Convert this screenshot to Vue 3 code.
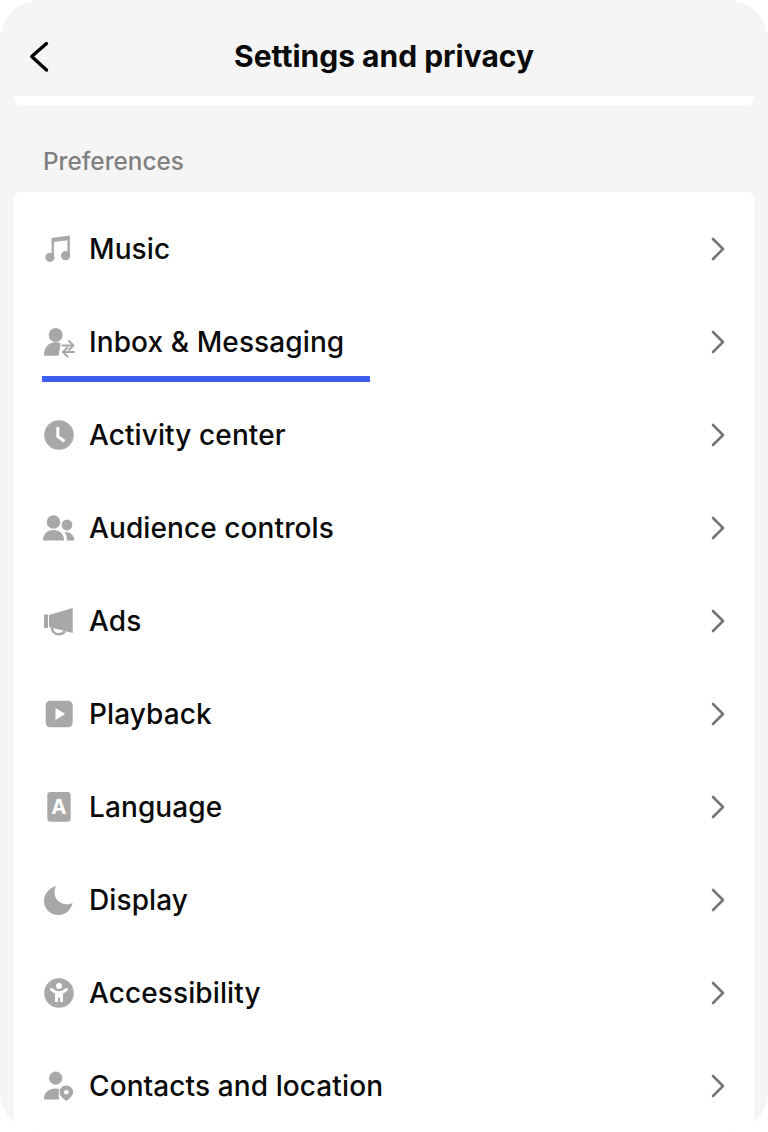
<script setup>
const rows = [
  { label: 'Music', icon: 'music' },
  { label: 'Inbox & Messaging', icon: 'inbox', marked: true },
  { label: 'Activity center', icon: 'clock' },
  { label: 'Audience controls', icon: 'people' },
  { label: 'Ads', icon: 'ads' },
  { label: 'Playback', icon: 'play' },
  { label: 'Language', icon: 'lang' },
  { label: 'Display', icon: 'moon' },
  { label: 'Accessibility', icon: 'access' },
  { label: 'Contacts and location', icon: 'contact' }
]
</script>

<template>
  <div class="page">
    <div class="phone">
      <header class="topbar">
        <button type="button" class="back" aria-label="Back">
          <svg viewBox="0 0 24 34" width="24" height="34" aria-hidden="true">
            <path d="M19.500 4.500 4.700 17.500 19.500 31" fill="none" stroke="#000" stroke-width="3.400" stroke-linecap="round" stroke-linejoin="round" />
          </svg>
        </button>
        <h1>Settings and privacy</h1>
      </header>
      <div class="strip"></div>
      <h2 class="section-title">Preferences</h2>
      <ul class="card">
        <li v-for="row in rows" :key="row.label" class="row">
          <svg class="icon" viewBox="0 0 32 32" width="32" height="32" aria-hidden="true">
            <template v-if="row.icon === 'music'">
              <path d="M9.800 7.500V24M25.600 5.500V22.500" fill="none" stroke="#a8a8a8" stroke-width="2.400" />
              <path d="M8.600 5 26.800 2.600V7L8.600 9.200Z" fill="#a8a8a8" />
              <circle cx="7" cy="24.300" r="4.600" fill="#a8a8a8" />
              <circle cx="22.600" cy="22.700" r="4.600" fill="#a8a8a8" />
            </template>
            <template v-else-if="row.icon === 'inbox'">
              <circle cx="12.700" cy="9" r="7" fill="#a8a8a8" />
              <path d="M1 29.700C1 21 5.500 16.200 12.500 16.200c2.500 0 4 .4 5.200 1.200L15.500 29.700Z" fill="#a8a8a8" />
              <path d="M19.500 19.500H30M26 15l4.500 4.500-4.500 4.500" fill="none" stroke="#a8a8a8" stroke-width="2" stroke-linecap="round" stroke-linejoin="round" />
              <path d="M31 26H20M24.500 21.500 20 26l4.500 4.500" fill="none" stroke="#a8a8a8" stroke-width="2" stroke-linecap="round" stroke-linejoin="round" />
            </template>
            <template v-else-if="row.icon === 'clock'">
              <circle cx="16" cy="16" r="14.800" fill="#a8a8a8" />
              <path d="M14.800 8v9.500l6.700 4.700" fill="none" stroke="#fff" stroke-width="3" stroke-linejoin="round" />
            </template>
            <template v-else-if="row.icon === 'people'">
              <circle cx="10.500" cy="10" r="6.800" fill="#a8a8a8" />
              <path d="M0 28.500c0-6.800 4.500-10.500 10.500-10.500S21 21.700 21 28.500Z" fill="#a8a8a8" />
              <circle cx="24" cy="13" r="5.400" fill="#a8a8a8" />
              <path d="M21.500 20c5.500-.5 9.500 2.500 10 8.500h-7.500c-.3-3.500-.7-6.300-2.500-8.500Z" fill="#a8a8a8" />
            </template>
            <template v-else-if="row.icon === 'ads'">
              <path d="M1 9.500H5V23H1Z" fill="#a8a8a8" />
              <path d="M6 10 29.700 3V28L6 22Z" fill="#a8a8a8" />
              <path d="M8.800 22.500c.3 4 3.200 6.700 7 6.700 2.800 0 5-1 6.200-3" fill="none" stroke="#a8a8a8" stroke-width="2.600" />
            </template>
            <template v-else-if="row.icon === 'play'">
              <rect x="2.700" y="2.700" width="27" height="26.600" rx="4.500" fill="#a8a8a8" />
              <path d="M12.500 10 22.200 16l-9.700 6Z" fill="#fff" />
            </template>
            <template v-else-if="row.icon === 'lang'">
              <rect x="4.300" y="1" width="23.400" height="29.700" rx="3" fill="#a8a8a8" />
              <text x="16" y="23" text-anchor="middle" class="glyph-a">A</text>
            </template>
            <template v-else-if="row.icon === 'moon'">
              <path d="M13 2C6 4 1 10 1 17c0 8 6.500 14 14.500 14 6.500 0 12-4 14.200-12-2 1-3.700 1.300-5.700 1.300C16.500 20.300 11.500 15 11.500 8.500c0-2.500.5-4.500 1.500-6.500Z" fill="#a8a8a8" />
            </template>
            <template v-else-if="row.icon === 'access'">
              <circle cx="16" cy="16" r="14.800" fill="#a8a8a8" />
              <circle cx="16" cy="9" r="3" fill="#fff" />
              <path d="M8.500 12.500 11.800 14.700c1.200.8 2.800 1.100 4.200 1.100s3-.3 4.200-1.100l3.300-2.200" fill="none" stroke="#fff" stroke-width="3" stroke-linecap="round" />
              <path d="M12 14.500h8V25h-3v-4.300h-2V25h-3Z" fill="#fff" />
            </template>
            <template v-else>
              <circle cx="12.700" cy="8.200" r="6.600" fill="#a8a8a8" />
              <path d="M1 29.500c0-7 4.500-11 11-11 2.500 0 4.500.5 6.500 1.500-2.800 2-3.500 6-2 9.500Z" fill="#a8a8a8" />
              <path d="M23.300 31.500c-4.700-3.400-7.300-6.200-7.300-9.200a7.300 7.300 0 0 1 14.600 0c0 3-2.600 5.800-7.300 9.200Z" fill="#a8a8a8" stroke="#fff" stroke-width="1" />
              <circle cx="23.300" cy="22.300" r="2.300" fill="#fff" />
            </template>
          </svg>
          <span class="label">{{ row.label }}</span>
          <svg class="chevron" viewBox="0 0 16 26" width="16" height="26" aria-hidden="true">
            <path d="M3 3 13 13 3 23" fill="none" stroke="#757575" stroke-width="2.600" stroke-linecap="round" stroke-linejoin="round" />
          </svg>
          <span v-if="row.marked" class="marker"></span>
        </li>
      </ul>
    </div>
  </div>
</template>

<style scoped>
.page {
  height: 1132px;
  background: #fff;
  overflow: hidden;
  font-family: Inter, "Liberation Sans", sans-serif;
}

.phone {
  height: 1132px;
  background: #f5f5f5;
  border-radius: 40px;
  padding: 0 14px;
  box-sizing: border-box;
  overflow: hidden;
}

.topbar {
  position: relative;
  height: 96px;
  display: flex;
  align-items: center;
  justify-content: center;
  padding-top: 16px;
  box-sizing: border-box;
}

.topbar h1 {
  margin: 0;
  font-size: 30px;
  font-weight: 700;
  color: #0a0a0a;
}

.back {
  position: absolute;
  left: 13px;
  top: 39px;
  padding: 0;
  border: 0;
  background: none;
  display: block;
}

.back svg {
  display: block;
}

.strip {
  height: 9px;
  background: #fff;
  border-radius: 0 0 6px 6px;
}

.section-title {
  margin: 0;
  padding: 41px 0 0 29px;
  height: 87px;
  box-sizing: border-box;
  font-size: 24.300px;
  line-height: 30px;
  font-weight: 500;
  color: #808080;
}

.card {
  margin: 0;
  padding: 10px 0 0;
  list-style: none;
  background: #fff;
  border-radius: 6px 6px 0 0;
  height: 940px;
  box-sizing: border-box;
}

.row {
  position: relative;
  height: 93px;
  display: flex;
  align-items: center;
  padding: 0 28px;
}

.icon {
  flex: none;
  margin: 0 14px 0 1px;
  overflow: visible;
}

.glyph-a {
  font-family: Inter, sans-serif;
  font-size: 20.500px;
  font-weight: 700;
  fill: #fff;
}

.label {
  flex: 1;
  font-size: 28px;
  letter-spacing: 0.1px;
  font-weight: 500;
  color: #0a0a0a;
}

.chevron {
  flex: none;
}

.marker {
  position: absolute;
  left: 28px;
  top: 81px;
  width: 328px;
  height: 6px;
  background: #3d5cf0;
}
</style>

<style>
body {
  background: #fff;
}
</style>
